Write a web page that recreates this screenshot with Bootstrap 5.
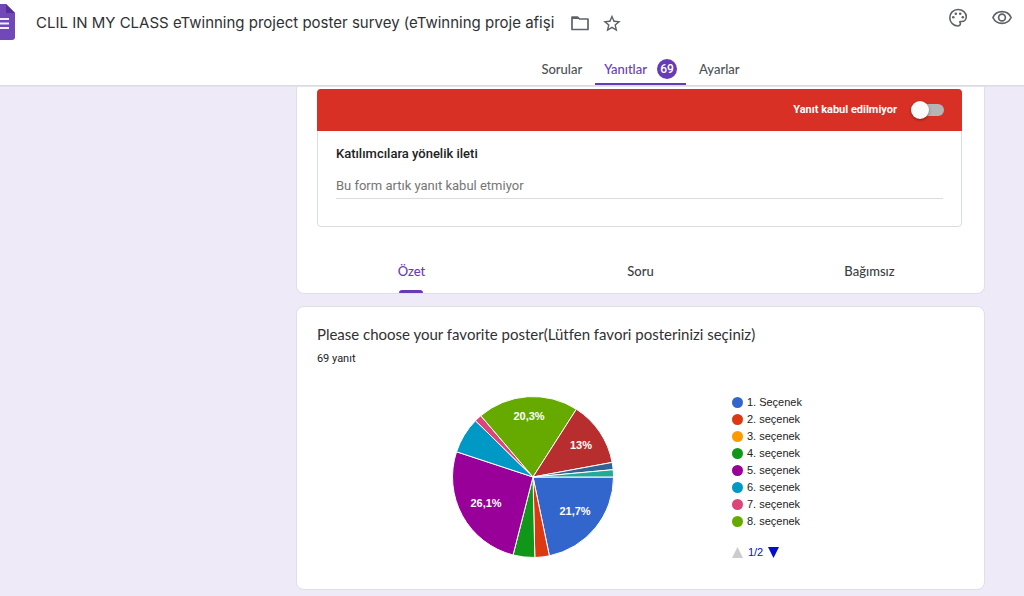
<!DOCTYPE html>
<html lang="tr">
<head>
<meta charset="utf-8">
<meta name="viewport" content="width=device-width, initial-scale=1">
<title>CLIL IN MY CLASS eTwinning project poster survey</title>
<link href="https://cdn.jsdelivr.net/npm/bootstrap@5.3.0/dist/css/bootstrap.min.css" rel="stylesheet">
<style>
  :root { --violet: #673ab7; --ink: #202124; --grey: #5f6368; --line: #dadce0; }
  body { background: #eeeaf7; color: var(--ink); font-family: Roboto, sans-serif; font-size: 13px; line-height: 20px; }
  a { text-decoration: none; }
  .brand-font { font-family: Lato, sans-serif; font-variant-ligatures: none; }
  .top-area { background: #fff; border-bottom: 1px solid var(--line); box-shadow: 0 1px 0 #e4e3ea; position: relative; }
  .title-row { height: 46px; padding-right: 12px; }
  .form-title { font-family: Inter, sans-serif; font-size: 15px; line-height: 24px; font-weight: 400; margin: 0 14px 0 21px; color: #303134; }
  .icon-button { border: 0; background: none; padding: 0; color: var(--grey); line-height: 0; }
  .column-area { padding-left: 28.9%; padding-right: 39px; }
  .main-tabs { height: 39px; gap: 4px; }
  .main-tabs .nav-link { color: #4d5156; font-weight: 500; padding: 8px 9px 0; border-bottom: 2px solid transparent; line-height: 20px; }
  .main-tabs .nav-link.active { color: var(--violet); border-color: var(--violet); }
  .count-badge { background: var(--violet); width: 20px; height: 20px; font-family: Roboto, sans-serif; font-size: 12px; font-weight: 500; padding: 0; line-height: 20px; margin-left: 10px; }
  .sheet { background: #fff; border: 1px solid #e0dfe8; border-radius: 8px; }
  .sheet-top { border-top: 0; border-radius: 0 0 8px 8px; padding-top: 3px; }
  .message-box { border: 1px solid var(--line); border-radius: 4px; margin: 0 22px 0 20px; }
  .status-bar { background: #d93025; color: #fff; height: 42px; margin: -1px -1px 0; border-radius: 4px 4px 0 0; padding-right: 18px; font-size: 11px; font-weight: 700; }
  .form-switch .form-check-input.accept-toggle { appearance: none; width: 32px; height: 12px; margin: 0 0 0 15px; background: #b5b5b5; border: 0; border-radius: 6px; position: relative; float: none; }
  .accept-toggle::before { content: ""; position: absolute; left: -1px; top: -3px; width: 18px; height: 18px; border-radius: 50%; background: #fafafa; box-shadow: 0 1px 3px rgba(0,0,0,.4); }
  .message-body { padding: 13px 18px 27px; }
  .message-body label { font-weight: 500; }
  .message-input { border: 0; border-bottom: 1px solid var(--line); border-radius: 0; padding: 0 0 3px; margin-top: 11px; font-size: 13px; line-height: 20px; min-height: 0; height: 24px; color: #757575; background: none; }
  .view-tabs { margin-top: 34px; }
  .view-tabs .nav-link { color: #3c4043; font-weight: 500; padding: 0; height: 32px; }
  .view-tabs .nav-link.active { color: var(--violet); }
  .view-tabs .nav-link.active::after { content: ""; display: block; width: 24px; height: 3px; margin: 9px auto 0; border-radius: 3px 3px 0 0; background: var(--violet); }
  .question-sheet { margin-top: 12px; padding: 17px 20px 29px; }
  .question-title { font-size: 15px; line-height: 20px; font-weight: 400; margin: 0; color: #303134; }
  .answer-count { font-size: 11px; line-height: 16px; margin: 7px 0 0; }
  .chart-row { margin-top: 27px; padding-left: 133px; gap: 116px; }
  .pie text, .legend-area { font-family: "Liberation Sans", sans-serif; font-size: 11px; }
  .pie text { fill: #fff; font-weight: 700; text-anchor: middle; }
  .legend-area { color: #222; }
  .legend-area li { line-height: 17px; gap: 4px; }
  .dot { width: 11px; height: 11px; border-radius: 50%; }
  .pager { margin-top: 14px; line-height: 16px; color: #0011cc; gap: 5px; }
</style>
</head>
<body>
<header class="top-area">
  <div class="title-row d-flex align-items-center">
    <svg width="15" height="36" viewBox="0 0 15 36" class="flex-shrink-0 align-self-start mt-1" aria-hidden="true">
      <path d="M0 0H6L15 9V33Q15 36 12 36H0Z" fill="#7248b9"/>
      <path d="M6 0L15 9H6Z" fill="#553098"/>
      <path d="M0 15H9M0 19.500H9M0 24H9" stroke="#f3eefb" stroke-width="2" fill="none"/>
    </svg>
    <h1 class="form-title text-nowrap">CLIL IN MY CLASS eTwinning project poster survey (eTwinning proje afişi</h1>
    <button class="icon-button" type="button" aria-label="Klasöre taşı">
      <svg width="24" height="24" viewBox="0 0 24 24" fill="none" stroke="currentColor" stroke-width="1.700"><path d="M4 6H9.500L11.500 8H20V18.500H4Z" stroke-linejoin="round"/><path d="M4 7H10.500" stroke-width="2"/></svg>
    </button>
    <button class="icon-button ms-2" type="button" aria-label="Yıldız ekle">
      <svg width="24" height="24" viewBox="0 0 24 24"><path transform="translate(1.400 2) scale(.88)" fill="currentColor" d="M22 9.240l-7.190-.62L12 2 9.190 8.630 2 9.240l5.460 4.730L5.820 21 12 17.270 18.180 21l-1.630-7.030L22 9.240zM12 15.400l-3.760 2.270 1-4.280-3.320-2.880 4.380-.38L12 6.100l1.710 4.040 4.380.38-3.320 2.880 1 4.280L12 15.400z"/></svg>
    </button>
    <div class="ms-auto d-flex gap-4 align-self-start pt-2">
      <button class="icon-button" type="button" aria-label="Temayı özelleştir">
        <svg width="20" height="20" viewBox="0 0 20 20" fill="currentColor"><path d="M10 18C5.600 18 1.800 14.500 1.800 9.800S5.300 1.500 10 1.500s8.300 3.300 8.300 7.300c0 2.700-2 4.700-4.600 4.700h-1.500c-.4 0-.6.500-.3.800 1.200 1.500.3 3.700-1.900 3.700Z" fill="none" stroke="currentColor" stroke-width="1.600"/><circle cx="5.300" cy="9.200" r="1.300"/><circle cx="7.800" cy="5.800" r="1.300"/><circle cx="12.200" cy="5.800" r="1.300"/><circle cx="14.800" cy="9.200" r="1.300"/></svg>
      </button>
      <button class="icon-button" type="button" aria-label="Önizleme">
        <svg width="20" height="20" viewBox="0 0 20 20" fill="none" stroke="currentColor" stroke-width="1.700"><path d="M.9 9.500C2.600 5.900 6 3.700 10 3.700s7.400 2.200 9.100 5.800c-1.700 3.600-5.100 5.800-9.100 5.800S2.600 13.100.9 9.500Z"/><circle cx="10" cy="9.500" r="3.400"/></svg>
      </button>
    </div>
  </div>
  <div class="column-area">
    <nav class="main-tabs nav brand-font justify-content-center flex-nowrap">
      <a class="nav-link d-flex align-items-center" href="#sorular">Sorular</a>
      <a class="nav-link d-flex align-items-center active" href="#yanitlar" aria-current="page">Yanıtlar <span class="badge rounded-circle count-badge">69</span></a>
      <a class="nav-link d-flex align-items-center" href="#ayarlar">Ayarlar</a>
    </nav>
  </div>
</header>

<main class="column-area pb-2">
  <section class="sheet sheet-top">
    <div class="message-box">
      <div class="status-bar form-switch d-flex align-items-center justify-content-end">
        <label for="accept">Yanıt kabul edilmiyor</label>
        <input class="form-check-input accept-toggle" type="checkbox" role="switch" id="accept">
      </div>
      <div class="message-body">
        <label class="d-block" for="message">Katılımcılara yönelik ileti</label>
        <input class="form-control message-input" type="text" id="message" value="Bu form artık yanıt kabul etmiyor">
      </div>
    </div>
    <nav class="view-tabs nav nav-fill brand-font row g-0">
      <a class="nav-link col-4 active" href="#ozet" aria-current="true">Özet</a>
      <a class="nav-link col-4" href="#soru">Soru</a>
      <a class="nav-link col-4" href="#bagimsiz">Bağımsız</a>
    </nav>
  </section>

  <section class="sheet question-sheet">
    <h2 class="question-title brand-font">Please choose your favorite poster(Lütfen favori posterinizi seçiniz)</h2>
    <p class="answer-count">69 yanıt</p>
    <div class="chart-row d-flex align-items-start">
      <svg class="pie flex-shrink-0" width="166" height="166" viewBox="-83 -83 166 166" role="img" aria-label="Yanıt dağılımı">
        <g id="slices" stroke="#fff" stroke-width="1"></g>
        <text x="42" y="38">21,7%</text>
        <text x="-47" y="30">26,1%</text>
        <text x="-4" y="-57">20,3%</text>
        <text x="48" y="-28">13%</text>
      </svg>
      <div class="legend-area">
        <ul class="list-unstyled mb-0" id="legend"></ul>
        <div class="pager d-flex align-items-center">
          <button class="icon-button" type="button" aria-label="Önceki" disabled><svg width="11" height="11"><path d="M0 11H11L5.500 0Z" fill="#ccc"/></svg></button>
          <span>1/2</span>
          <button class="icon-button" type="button" aria-label="Sonraki"><svg width="11" height="11"><path d="M0 0H11L5.500 11Z" fill="#01c"/></svg></button>
        </div>
      </div>
    </div>
  </section>
</main>

<script src="https://cdn.jsdelivr.net/npm/bootstrap@5.3.0/dist/js/bootstrap.bundle.min.js"></script>
<script>
  // Answers per option, clockwise from three o'clock
  const options = [
    [15, '#3366cc', '1. Seçenek'], [2, '#dc3912', '2. seçenek'], [0, '#ff9900', '3. seçenek'],
    [3, '#109618', '4. seçenek'], [18, '#990099', '5. seçenek'], [5, '#0099c6', '6. seçenek'],
    [1, '#dd4477', '7. seçenek'], [14, '#66aa00', '8. seçenek'], [9, '#b82e2e'],
    [1, '#316395'], [1, '#22aa99']
  ];
  const total = options.reduce((sum, o) => sum + o[0], 0);
  const radius = 80.5;
  const point = n => {
    const angle = n / total * 2 * Math.PI;
    return (radius * Math.cos(angle)).toFixed(2) + ' ' + (radius * Math.sin(angle)).toFixed(2);
  };
  let start = 0, slices = '', legend = '';
  for (const [count, color, label] of options) {
    if (count) slices += `<path fill="${color}" d="M0 0L${point(start)}A${radius} ${radius} 0 0 1 ${point(start + count)}Z"/>`;
    if (label) legend += `<li class="d-flex align-items-center"><span class="dot" style="background:${color}"></span>${label}</li>`;
    start += count;
  }
  document.getElementById('slices').innerHTML = slices;
  document.getElementById('legend').innerHTML = legend;
</script>
</body>
</html>
